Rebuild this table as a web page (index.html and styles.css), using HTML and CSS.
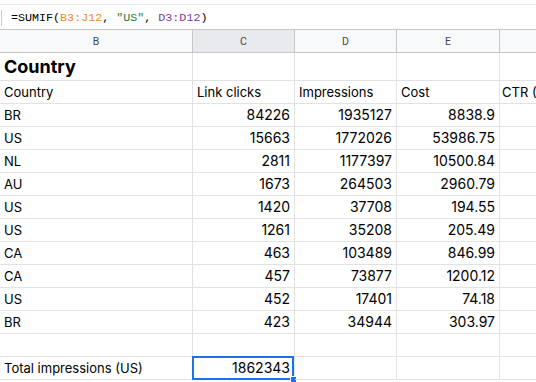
FILE: index.html
```html
<!DOCTYPE html>
<html>
<head>
<meta charset="utf-8">
<link rel="stylesheet" href="styles.css">
</head>
<body>
<div class="fbar">
  <span class="sep"></span>
  <span class="formula">=SUMIF(<span class="r1">B3:J12</span>, <span class="str">"US"</span>, <span class="r2">D3:D12</span>)</span>
</div>
<div class="sheet">
  <div class="hd">B</div><div class="hd sel-col">C</div><div class="hd">D</div><div class="hd">E</div><div class="hd"></div>

  <div class="c title">Country</div><div class="c title"></div><div class="c title"></div><div class="c title"></div><div class="c title"></div>

  <div class="c">Country</div><div class="c">Link clicks</div><div class="c">Impressions</div><div class="c">Cost</div><div class="c last">CTR (%)</div>

  <div class="c">BR</div><div class="c n">84226</div><div class="c n">1935127</div><div class="c n">8838.9</div><div class="c"></div>
  <div class="c">US</div><div class="c n">15663</div><div class="c n">1772026</div><div class="c n">53986.75</div><div class="c"></div>
  <div class="c">NL</div><div class="c n">2811</div><div class="c n">1177397</div><div class="c n">10500.84</div><div class="c"></div>
  <div class="c">AU</div><div class="c n">1673</div><div class="c n">264503</div><div class="c n">2960.79</div><div class="c"></div>
  <div class="c">US</div><div class="c n">1420</div><div class="c n">37708</div><div class="c n">194.55</div><div class="c"></div>
  <div class="c">US</div><div class="c n">1261</div><div class="c n">35208</div><div class="c n">205.49</div><div class="c"></div>
  <div class="c">CA</div><div class="c n">463</div><div class="c n">103489</div><div class="c n">846.99</div><div class="c"></div>
  <div class="c">CA</div><div class="c n">457</div><div class="c n">73877</div><div class="c n">1200.12</div><div class="c"></div>
  <div class="c">US</div><div class="c n">452</div><div class="c n">17401</div><div class="c n">74.18</div><div class="c"></div>
  <div class="c">BR</div><div class="c n">423</div><div class="c n">34944</div><div class="c n">303.97</div><div class="c"></div>

  <div class="c"></div><div class="c"></div><div class="c"></div><div class="c"></div><div class="c"></div>

  <div class="c">Total impressions (US)</div><div class="c n active">1862343<span class="selbox"><span class="handle"></span></span></div><div class="c"></div><div class="c"></div><div class="c"></div>
</div>
</body>
</html>
```

FILE: styles.css
```css
html, body {
  margin: 0;
  padding: 0;
  background: #fff;
  overflow: hidden;
}
body {
  width: 536px;
  height: 382px;
  font-family: Inter, "Liberation Sans", sans-serif;
  color: #000;
}
.fbar {
  box-sizing: border-box;
  border-top: 1px solid #e6e6e6;
  margin-top: 4px;
  height: 25px;
  display: flex;
  align-items: center;
  position: relative;
}
.sep {
  width: 1px;
  height: 16px;
  background: #c7c7c7;
  margin-left: 1px;
  margin-top: 2px;
}
.formula {
  font-family: "Liberation Mono", monospace;
  font-size: 11.7px;
  margin-left: 9px;
  margin-top: 1px;
  color: #000;
  white-space: pre;
}
.r1 { color: #ef8a1a; }
.str { color: #188038; }
.r2 { color: #7d3c98; }

.sheet {
  display: grid;
  grid-template-columns: 193px 102px 102px 103px 1fr;
}
.hd {
  height: 24px;
  box-sizing: border-box;
  border-top: 1px solid #c7c7c7;
  border-bottom: 1px solid #c7c7c7;
  border-right: 1px solid #c7c7c7;
  background: #f8f9fa;
  font-family: Roboto, "Liberation Sans", sans-serif;
  font-size: 10.5px;
  color: #444746;
  display: flex;
  align-items: center;
  justify-content: center;
}
.hd.sel-col {
  background: #e8eaed;
}
.c {
  height: 23px;
  box-sizing: border-box;
  border-right: 1px solid #e2e2e2;
  border-bottom: 1px solid #e2e2e2;
  font-size: 13px;
  line-height: 17px;
  padding: 0 4px 2px 4px;
  display: flex;
  align-items: flex-end;
  white-space: nowrap;
  overflow: hidden;
  position: relative;
}
.c.last {
  overflow: visible;
  padding-left: 2px;
}
.c.title {
  height: 28px;
  font-size: 18px;
  font-weight: 700;
  line-height: 22px;
  padding-bottom: 2px;
  overflow: visible;
}
.c.n {
  justify-content: flex-end;
  font-size: 14px;
  padding-bottom: 3px;
}
.c.active {
  overflow: visible;
}
.selbox {
  position: absolute;
  left: -1px;
  top: -1px;
  right: 0;
  bottom: -1px;
  border: 2px solid #1a73e8;
}
.handle {
  position: absolute;
  right: -5px;
  bottom: -5px;
  width: 5px;
  height: 5px;
  background: #1a73e8;
  border: 1px solid #fff;
}
```
